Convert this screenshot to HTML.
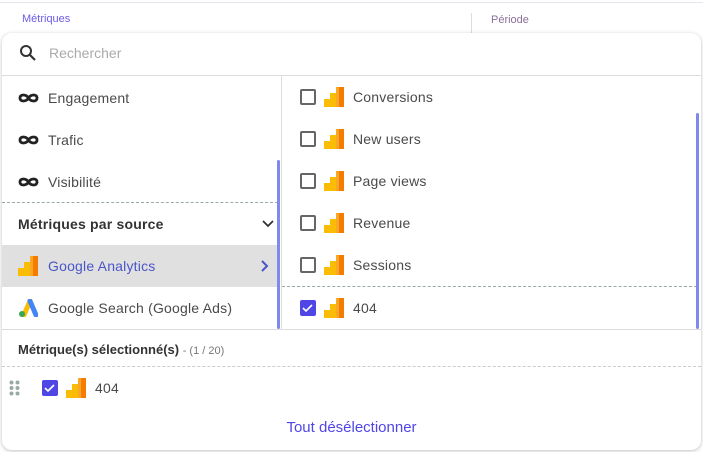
<!DOCTYPE html>
<html><head><meta charset="utf-8"><style>
*{box-sizing:border-box;margin:0;padding:0}
body{width:703px;height:452px;background:#fff;font-family:"Liberation Sans",sans-serif;position:relative;overflow:hidden;color:#333}
.abs{position:absolute}
.panel{position:absolute;left:2px;top:33px;width:699px;height:417px;background:#fff;border-radius:10px;box-shadow:0 1px 4px rgba(0,0,0,.25);overflow:hidden}
.row{position:absolute;height:42px;display:flex;align-items:center;font-size:14px;color:#4a4a4a;letter-spacing:.2px}
.cb{width:16px;height:16px;border:2px solid #666;border-radius:2px;margin-right:8px}
.cbc{width:16px;height:16px;background:#4f46e5;border-radius:2px;margin-right:8px;display:flex;align-items:center;justify-content:center}
.ga{margin-right:9px}
</style></head><body>
<div class="abs" style="left:0;top:2px;width:703px;height:1px;background:#e3e8ee"></div>
<div class="abs" style="left:22px;top:13px;font-size:11px;color:#6b5ce7">Métriques</div>
<div class="abs" style="left:471px;top:13px;width:1px;height:22px;background:#ddd"></div>
<div class="abs" style="left:491px;top:14px;font-size:11px;color:#8a6f9a">Période</div>
<svg width="0" height="0" style="position:absolute"><defs>
<g id="ga"><rect x="0" y="12" width="8" height="8" fill="#fbbc04"/><rect x="6" y="6" width="8" height="14" fill="#fbbc04"/><rect x="14" y="0" width="6" height="20" fill="#f57c00"/><rect x="12" y="0" width="3" height="20" fill="#f9a825"/></g>
<g id="inf"><path d="M10.5 7C8 3 2 3 2 7s6 4 8.5 0 8.5-4 8.5 0-6 4-8.5 0z" fill="none" stroke="#222" stroke-width="2.8"/></g>
<g id="chk"><path d="M3 8l3 3 6-6" fill="none" stroke="#fff" stroke-width="1.6"/></g>
</defs></svg>
<div class="panel">
 <svg class="abs" style="left:17px;top:11px" width="18" height="18"><circle cx="7" cy="7" r="5" fill="none" stroke="#333" stroke-width="2"/><path d="M11 11l5 5" stroke="#333" stroke-width="2.2"/></svg>
 <div class="abs" style="left:47px;top:12px;font-size:14px;color:#aaa">Rechercher</div>
 <div class="abs" style="left:0;top:42px;width:699px;height:1px;background:#ddd"></div>
 <div class="abs" style="left:279px;top:43px;width:1px;height:253px;background:#ddd"></div>
 <div class="row" style="left:16px;top:44px"><svg width="22" height="14" style="margin-right:8px"><use href="#inf"/></svg>Engagement</div>
 <div class="row" style="left:16px;top:86px"><svg width="22" height="14" style="margin-right:8px"><use href="#inf"/></svg>Trafic</div>
 <div class="row" style="left:16px;top:128px"><svg width="22" height="14" style="margin-right:8px"><use href="#inf"/></svg>Visibilité</div>
 <div class="abs" style="left:0;top:169px;width:276px;border-top:1px dashed #9aa8a8"></div>
 <div class="row" style="left:16px;top:170px;width:256px;font-weight:bold;color:#333">Métriques par source<svg style="margin-left:auto" width="12" height="8"><path d="M1 1l5 5 5-5" fill="none" stroke="#333" stroke-width="1.8"/></svg></div>
 <div class="row" style="left:0;top:212px;width:276px;background:#e0e0e0;padding-left:16px;color:#4a55c8"><svg class="ga" width="20" height="20" style="margin-right:10px"><use href="#ga"/></svg>Google Analytics<svg style="margin-left:auto;margin-right:9px" width="8" height="12"><path d="M1 1l5 5-5 5" fill="none" stroke="#4a55c8" stroke-width="2"/></svg></div>
 <div class="row" style="left:16px;top:254px"><svg width="20" height="18" style="margin-right:10px"><path d="M6 16L12 2" stroke="#fbbc04" stroke-width="5" stroke-linecap="round"/><path d="M12 2l6 14" stroke="#4285f4" stroke-width="5" stroke-linecap="round"/><circle cx="4" cy="15" r="3" fill="#34a853"/></svg>Google Search (Google Ads)</div>
 <div class="abs" style="left:275px;top:127px;width:3px;height:169px;background:#8088ee;border-radius:2px"></div>
 <div class="row" style="left:298px;top:43px"><div class="cb"></div><svg class="ga" width="20" height="20"><use href="#ga"/></svg>Conversions</div>
 <div class="row" style="left:298px;top:85px"><div class="cb"></div><svg class="ga" width="20" height="20"><use href="#ga"/></svg>New users</div>
 <div class="row" style="left:298px;top:127px"><div class="cb"></div><svg class="ga" width="20" height="20"><use href="#ga"/></svg>Page views</div>
 <div class="row" style="left:298px;top:169px"><div class="cb"></div><svg class="ga" width="20" height="20"><use href="#ga"/></svg>Revenue</div>
 <div class="row" style="left:298px;top:211px"><div class="cb"></div><svg class="ga" width="20" height="20"><use href="#ga"/></svg>Sessions</div>
 <div class="abs" style="left:280px;top:253px;width:415px;border-top:1px dashed #9aa8a8"></div>
 <div class="row" style="left:298px;top:254px"><div class="cbc"><svg width="16" height="16"><use href="#chk"/></svg></div><svg class="ga" width="20" height="20"><use href="#ga"/></svg>404</div>
 <div class="abs" style="left:694px;top:80px;width:3px;height:216px;background:#8088ee;border-radius:2px"></div>
 <div class="abs" style="left:0;top:296px;width:699px;height:1px;background:#ddd"></div>
 <div class="abs" style="left:16px;top:309px;font-size:13px;font-weight:bold;color:#333">Métrique(s) sélectionné(s) <span style="font-weight:normal;color:#777;font-size:11px">- (1 / 20)</span></div>
 <div class="abs" style="left:0;top:333px;width:699px;border-top:1px dashed #ccc"></div>
 <svg class="abs" style="left:7px;top:347px" width="12" height="16"><g fill="#9aa8a8"><circle cx="2.5" cy="2.5" r="2"/><circle cx="8.5" cy="2.5" r="2"/><circle cx="2.5" cy="8" r="2"/><circle cx="8.5" cy="8" r="2"/><circle cx="2.5" cy="13.5" r="2"/><circle cx="8.5" cy="13.5" r="2"/></g></svg>
 <div class="row" style="left:40px;top:334px"><div class="cbc"><svg width="16" height="16"><use href="#chk"/></svg></div><svg class="ga" width="20" height="20"><use href="#ga"/></svg>404</div>
 <div class="abs" style="left:0;top:386px;width:699px;text-align:center;font-size:15px;color:#4f46e5">Tout désélectionner</div>
</div>
</body></html>
